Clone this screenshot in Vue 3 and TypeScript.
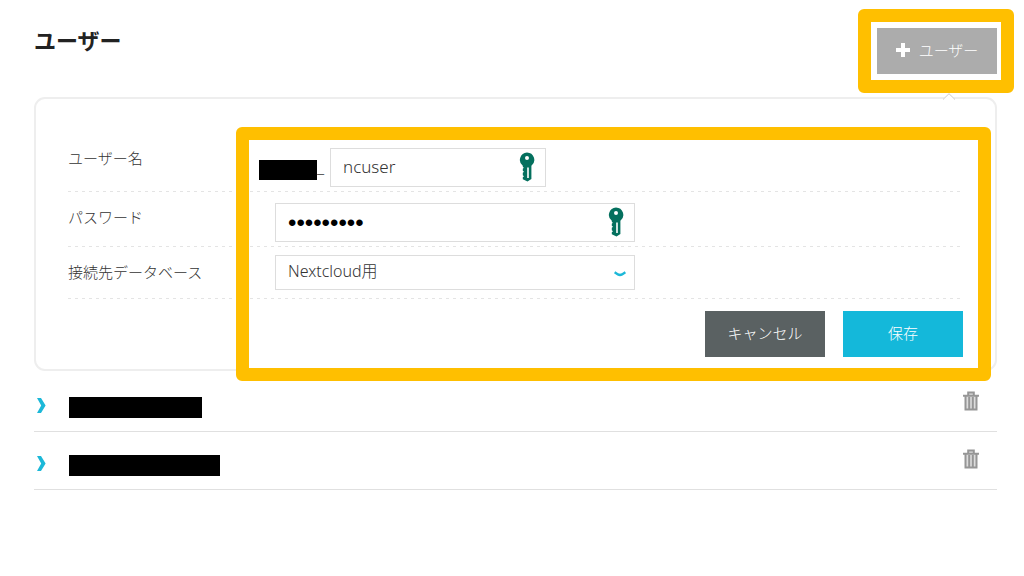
<script setup lang="ts">
import { ref } from 'vue'

interface ListedUser {
  id: number
  size: 'short' | 'long'
}

const userName = ref('ncuser')
const password = ref('password1')
const database = ref('nextcloud')
const users: ListedUser[] = [
  { id: 1, size: 'short' },
  { id: 2, size: 'long' },
]

const keyShape =
  'M8 .4a7.5 7.5 0 0 1 4.400 13.400v13.200L8.500 29.600 3.800 27.200v-2l1.200-1-1.200-1v-2.400l1.200-1-1.200-1v-2l1-1-1-1v-1A7.500 7.500 0 0 1 8 .4zM8 4a2 2 0 1 0 0 4 2 2 0 0 0 0-4zM8.200 15.500v10.500h1.600V15.500z'
</script>

<template>
  <main class="page">
    <header class="head">
      <h1 class="title">ユーザー</h1>
      <div class="add-wrap">
        <button type="button" class="btn add">
          <svg class="plus" viewBox="0 0 14 14" aria-hidden="true"><path d="M5 0h4v5h5v4H9v5H5V9H0V5h5z" /></svg>
          <span>ユーザー</span>
        </button>
        <div class="frame frame-add"></div>
      </div>
    </header>

    <form class="card" @submit.prevent>
      <svg class="notch" viewBox="0 0 12 8" aria-hidden="true"><path class="fill" d="M0 8V6L6 0l6 6v2z" /><path class="edge" d="M0 6.5L6 .7l6 5.8" /></svg>

      <div class="row row-name">
        <label for="user-name">ユーザー名</label>
        <div class="field">
          <span class="mask prefix"></span><span class="underscore">_</span>
          <div class="box narrow">
            <input id="user-name" v-model="userName" type="text" />
            <svg class="key" viewBox="0 0 16 30" aria-hidden="true"><path fill-rule="evenodd" :d="keyShape" /></svg>
          </div>
        </div>
      </div>

      <div class="row row-pass">
        <label for="password">パスワード</label>
        <div class="field inset">
          <div class="box">
            <input id="password" v-model="password" type="password" />
            <svg class="key" viewBox="0 0 16 30" aria-hidden="true"><path fill-rule="evenodd" :d="keyShape" /></svg>
          </div>
        </div>
      </div>

      <div class="row row-db">
        <label for="database">接続先データベース</label>
        <div class="field inset">
          <div class="box">
            <select id="database" v-model="database">
              <option value="nextcloud">Nextcloud用</option>
            </select>
            <svg class="caret" viewBox="0 0 12 6" aria-hidden="true"><path d="M.6 1.2L4 3.4Q6 4.6 8 3.4L11.4 1.2" /></svg>
          </div>
        </div>
      </div>

      <div class="actions">
        <button type="button" class="btn cancel">キャンセル</button>
        <button type="submit" class="btn save">保存</button>
      </div>
      <div class="frame frame-form"></div>
    </form>

    <ul class="list">
      <li v-for="user in users" :key="user.id">
        <button type="button" class="icon-btn open" aria-label="開く">
          <svg class="chevron" viewBox="0 0 9 15" aria-hidden="true"><path d="M0 0h4l4.600 7.500L4 15H0l4.200-7.500z" /></svg>
        </button>
        <span class="mask" :class="user.size"></span>
        <button type="button" class="icon-btn remove" aria-label="削除">
          <svg class="trash" viewBox="0 0 16 20" aria-hidden="true">
            <path d="M5.2 4V1.400h5.600V4M0 4.800h16M2.500 5v13.500h11V5M6.200 6v12M9.800 6v12" />
          </svg>
        </button>
      </li>
    </ul>
  </main>
</template>

<style>
body {
  margin: 0;
  background: #fff;
}
</style>

<style scoped>
.page {
  box-sizing: border-box;
  padding: 28px 27px 0 34px;
  color: #333;
  font-family: "Noto Sans", "Noto Sans CJK JP", sans-serif;
  font-size: 15px;
  font-weight: 300;
  line-height: 20px;
}
.head {
  display: flex;
  justify-content: space-between;
  align-items: flex-start;
  height: 69px;
}
.title {
  margin: 0;
  color: #222;
  font-size: 22px;
  font-weight: 700;
  line-height: 24px;
}
.btn {
  display: flex;
  align-items: center;
  justify-content: center;
  box-sizing: border-box;
  width: 120px;
  height: 46px;
  padding: 0 0 3px;
  border: 0;
  color: #fff;
  font: inherit;
}
.add-wrap {
  position: relative;
  z-index: 2;
}
.add {
  gap: 9px;
  background: #acacac;
}
.plus {
  width: 14px;
  height: 14px;
  fill: #fff;
}
.frame {
  position: absolute;
  border: 13px solid #ffbf00;
  border-radius: 6px;
  pointer-events: none;
}
.frame-add {
  inset: -19px -17px -19px -19px;
}
.frame-form {
  inset: 28px 4px -12px 200px;
}
.card {
  position: relative;
  padding: 39px 32px 12px;
  border: 2px solid #eee;
  border-radius: 11px;
}
.notch {
  position: absolute;
  top: -6px;
  right: 40px;
  width: 12px;
  height: 8px;
}
.notch .fill {
  fill: #fff;
}
.notch .edge {
  fill: none;
  stroke: #ccc;
}
.row {
  display: grid;
  grid-template-columns: 191px 1fr;
  align-items: start;
  background: repeating-linear-gradient(90deg, #e4e4e4 0 3px, transparent 3px 7px) left bottom / 100% 1px no-repeat;
}
.row-name {
  padding: 10px 0 5px;
}
.row-pass {
  padding: 11px 0 5px;
}
.row-db {
  padding: 8px 0 9px;
}
.row-pass label {
  padding-top: 4px;
}
.row-db label {
  padding-top: 7px;
}
.field {
  display: flex;
  align-items: flex-start;
}
.inset {
  margin-left: 16px;
}
.mask {
  display: block;
  height: 21px;
  background: #000;
}
.prefix {
  width: 58px;
  height: 20px;
  margin-top: 12px;
}
.underscore {
  width: 13px;
  margin-top: 9px;
  font-size: 17px;
}
.box {
  position: relative;
  width: 360px;
}
.narrow {
  width: 216px;
}
input,
select {
  display: block;
  box-sizing: border-box;
  width: 100%;
  height: 39px;
  margin: 0;
  padding: 0 40px 2px 12px;
  border: 1px solid #ddd;
  border-radius: 0;
  background: #fff;
  color: #333;
  font: inherit;
  font-size: 17px;
  outline: 0;
  appearance: none;
}
input[type="password"] {
  padding-bottom: 0;
  color: #000;
  font-family: "Liberation Sans", sans-serif;
  font-size: 24px;
}
select {
  height: 35px;
  padding-bottom: 4px;
  font-size: 16px;
}
.key {
  position: absolute;
  top: 4px;
  right: 11px;
  width: 16px;
  height: 30px;
  fill: #04705e;
}
.caret {
  position: absolute;
  top: 16px;
  right: 9px;
  width: 12px;
  height: 6px;
  fill: none;
  stroke: #1cb8d8;
  stroke-width: 2.4;
}
.actions {
  display: flex;
  justify-content: flex-end;
  gap: 18px;
  margin-top: 12px;
}
.cancel {
  background: #5a6162;
}
.save {
  background: #14b8da;
}
.list {
  margin: 3px 0 0;
  padding: 0;
  list-style: none;
}
.list li {
  display: flex;
  align-items: center;
  box-sizing: border-box;
  height: 58px;
  padding: 0 18px 0 3px;
  border-bottom: 1px solid #e0e0e0;
}
.list .mask {
  margin-top: 9px;
}
.short {
  width: 133px;
}
.long {
  width: 151px;
}
.icon-btn {
  display: flex;
  padding: 0;
  border: 0;
  background: none;
}
.open {
  width: 32px;
  margin-top: 6px;
}
.chevron {
  width: 9px;
  height: 15px;
  fill: #1cb8d8;
}
.remove {
  margin: 0 0 4px auto;
}
.trash {
  width: 16px;
  height: 20px;
  fill: #ddd;
  stroke: #969696;
  stroke-width: 2;
}
</style>
